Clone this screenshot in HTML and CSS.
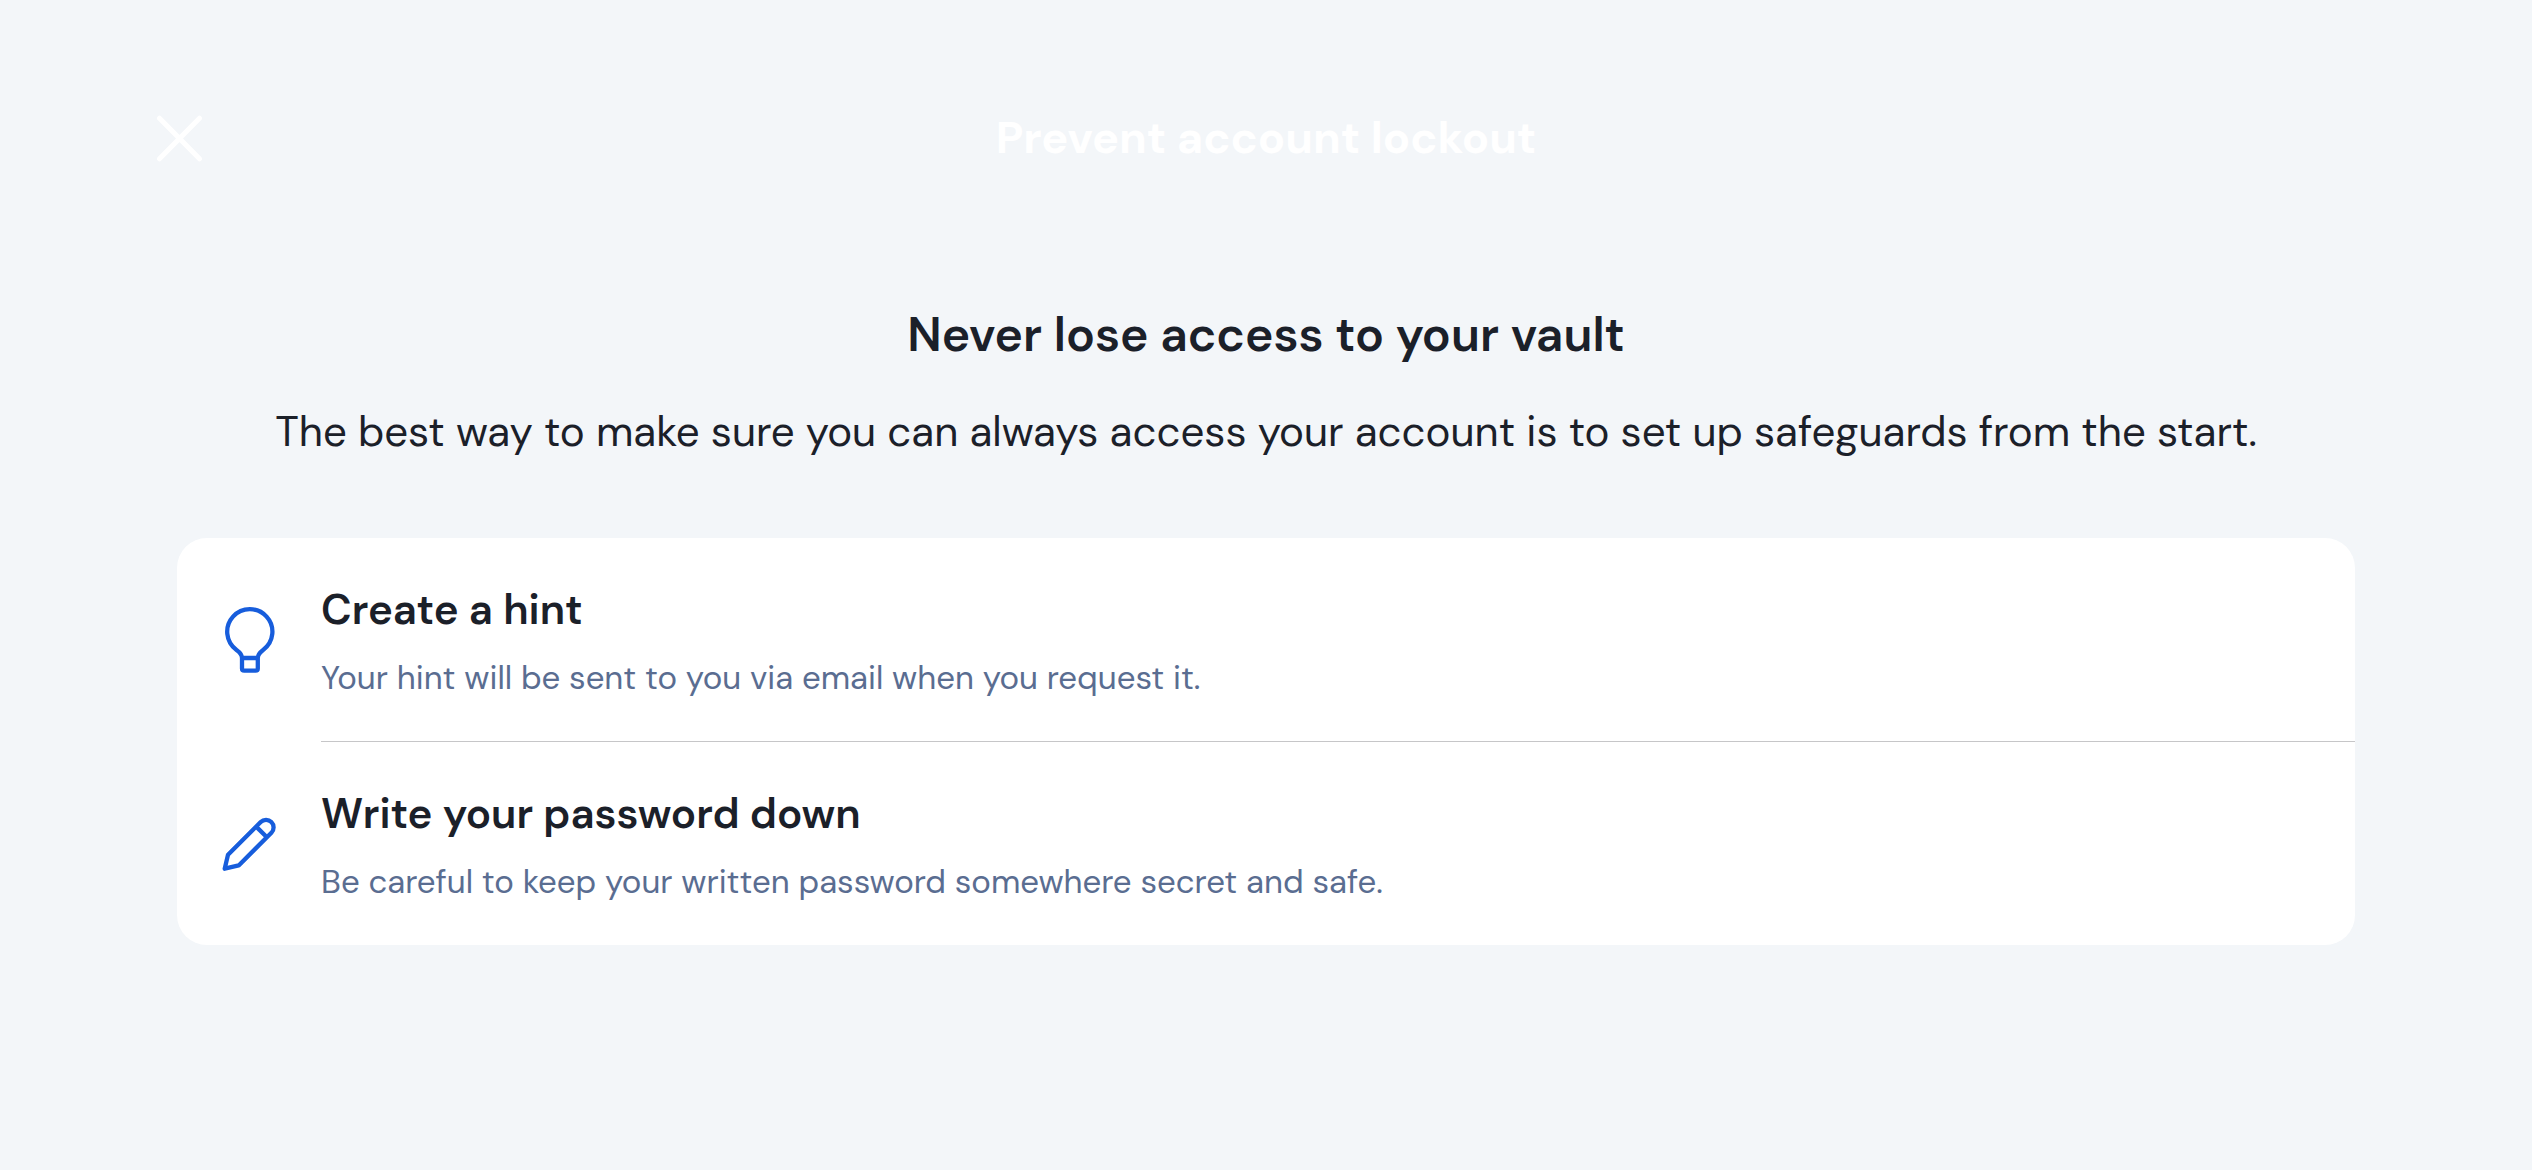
FILE: index.html
```html
<!DOCTYPE html>
<html lang="en">
<head>
<meta charset="utf-8">
<title>Prevent account lockout</title>
<link rel="stylesheet" href="styles.css">
</head>
<body>
<header class="topbar">
  <button class="close" type="button" aria-label="Close">
    <svg viewBox="0 0 48 48" width="48" height="48"><path d="M3.5 4.2 43.5 44.8M43.5 4.2 3.5 44.8"/></svg>
  </button>
  <h1 class="title">Prevent account lockout</h1>
</header>
<main class="content">
  <h2 class="headline">Never lose access to your vault</h2>
  <p class="lead">The best way to make sure you can always access your account is to set up safeguards from the start.</p>
  <ul class="card">
    <li class="item">
      <svg class="icon" viewBox="0 0 72 72"><path d="M29 54C29 51 27 48.5 23.5 46A22.6 22.6 0 1 1 50.1 46C46.8 48.5 44.8 51 44.8 54M29 54H44.8V64.5Q44.8 66.7 42.6 66.7H31.2Q29 66.7 29 64.5Z"/></svg>
      <div class="text">
        <h3 class="name">Create a hint</h3>
        <p class="note">Your hint will be sent to you via email when you request it.</p>
      </div>
    </li>
    <li class="item">
      <svg class="icon" viewBox="0 0 72 72"><path d="M11.7 60.7 15 46.8 47.7 14.1A7.5 7.5 0 0 1 58.4 24.7L25.7 57.4ZM43.2 18.6 53.9 29.2"/></svg>
      <div class="text">
        <h3 class="name">Write your password down</h3>
        <p class="note">Be careful to keep your written password somewhere secret and safe.</p>
      </div>
    </li>
  </ul>
</main>
</body>
</html>
```
FILE: styles.css
```css
* { box-sizing: border-box; }
body { margin: 0; background: #f3f6f9; color: #1b2029; font-family: "DM Sans", "Open Sans", sans-serif; }
h1, h2, h3, p, ul { margin: 0; padding: 0; }
.topbar { display: grid; grid-template-columns: 48px 1fr 48px; align-items: center; padding: 108px 156px 0; }
.close { width: 48px; height: 48px; padding: 0; border: 0; background: none; }
.close svg { display: block; fill: none; stroke: #fff; stroke-width: 5; stroke-linecap: round; }
.title { color: #fff; font-size: 45px; line-height: 60px; text-align: center; }
.content { padding: 134px 177px 0; text-align: center; }
.headline { font-size: 48px; line-height: 66px; font-weight: 600; }
.lead { margin-top: 34px; font-size: 42px; line-height: 60px; }
.card { margin-top: 76px; border-radius: 30px; background: #fff; overflow: hidden; list-style: none; text-align: left; }
.item { display: flex; align-items: flex-start; gap: 36px; padding-left: 36px; }
.icon { flex: none; width: 72px; height: 72px; margin-top: 66px; fill: none; stroke: #175ddc; stroke-width: 4.3; stroke-linecap: round; stroke-linejoin: round; }
.text { flex: 1; padding: 42px 36px 39px 0; }
.item:not(:last-child) .text { border-bottom: 1px solid #c6c6c8; }
.name { font-size: 42px; line-height: 60px; font-weight: 600; }
.note { margin-top: 14px; color: #5a6d91; font-size: 33px; line-height: 48px; }
```
